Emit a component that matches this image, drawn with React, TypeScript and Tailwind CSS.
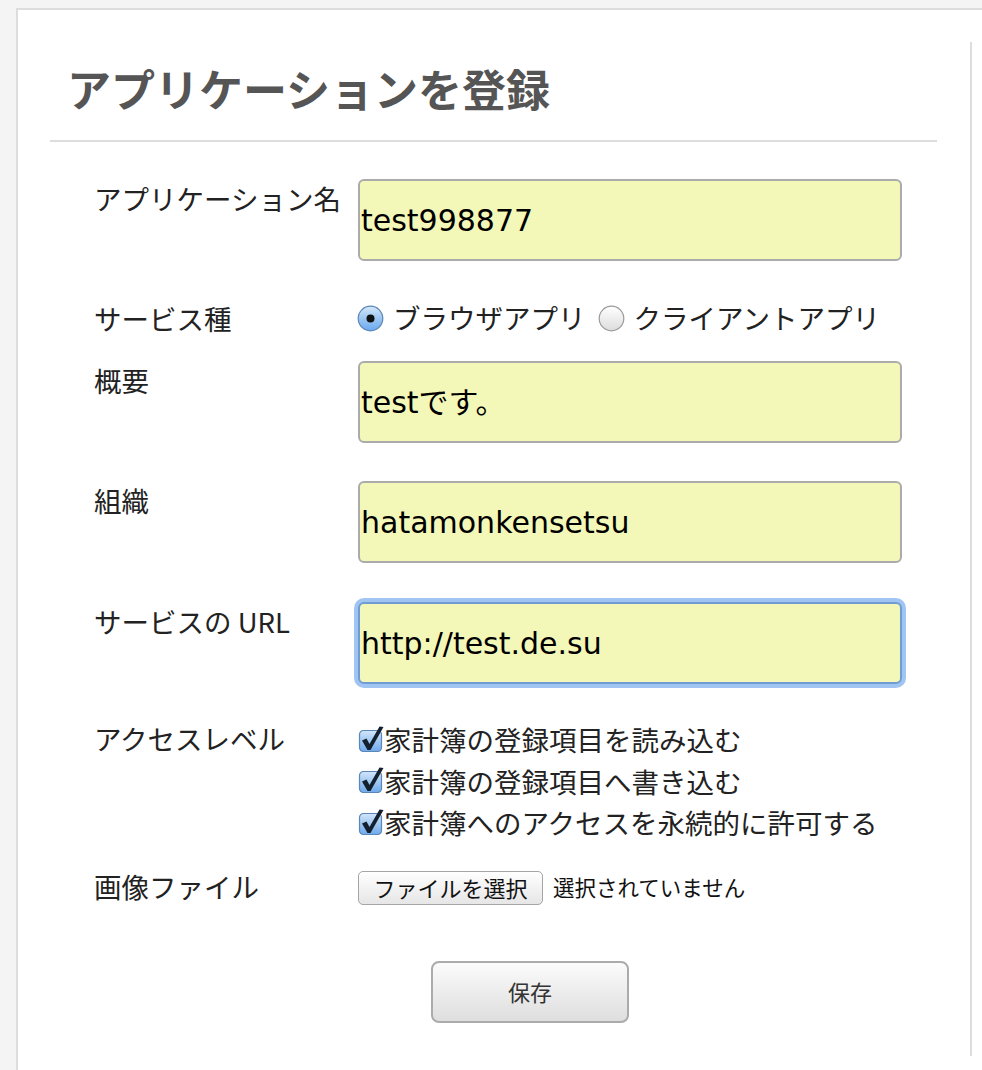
import React from "react";

const jp = { fontFamily: '"Noto Sans CJK JP", "Noto Sans", sans-serif' };
const inputFont = { fontFamily: '"DejaVu Sans", "Noto Sans CJK JP", sans-serif' };

function Radio({ checked }: { checked: boolean }) {
  return (
    <svg width="27" height="27" viewBox="0 0 27 27" className="shrink-0">
      <defs>
        <linearGradient id="rOn" x1="0" y1="0" x2="0" y2="1">
          <stop offset="0" stopColor="#d6e8fb" />
          <stop offset="0.5" stopColor="#9cc6f1" />
          <stop offset="1" stopColor="#6aaaf0" />
        </linearGradient>
        <linearGradient id="rOff" x1="0" y1="0" x2="0" y2="1">
          <stop offset="0" stopColor="#ffffff" />
          <stop offset="1" stopColor="#dcdcdc" />
        </linearGradient>
      </defs>
      {checked ? (
        <>
          <circle cx="13.5" cy="13.5" r="12.3" fill="url(#rOn)" stroke="#5b86b6" strokeWidth="1.2" />
          <circle cx="13.5" cy="13.5" r="4" fill="#111" />
        </>
      ) : (
        <circle cx="13.5" cy="13.5" r="12.3" fill="url(#rOff)" stroke="#9a9a9a" strokeWidth="1.2" />
      )}
    </svg>
  );
}

function Check() {
  return (
    <svg width="26" height="28" viewBox="0 0 26 28" className="shrink-0 -mt-[2px]">
      <defs>
        <linearGradient id="cOn" x1="0" y1="0" x2="0" y2="1">
          <stop offset="0" stopColor="#d3e6fb" />
          <stop offset="0.5" stopColor="#a0c8f2" />
          <stop offset="1" stopColor="#6eaaee" />
        </linearGradient>
      </defs>
      <rect x="1.5" y="5.5" width="22" height="21" rx="4" fill="url(#cOn)" stroke="#5b86b6" strokeWidth="1.2" />
      <path d="M4 15.5 L8.5 13.5 L11.5 19 L21.5 1.5 L25.5 2 L12.5 25 L9.5 25 Z" fill="#14202e" />
    </svg>
  );
}

function TextBox({ value, focused }: { value: string; focused?: boolean }) {
  return (
    <div
      className={
        "w-[544px] h-[82px] rounded-[6px] bg-[#f3f7b8] flex items-center pl-[1px] text-[30px] text-black " +
        (focused
          ? "border-2 border-[#6f9dd3] shadow-[0_0_0_4px_rgba(130,178,238,0.75)]"
          : "border-2 border-[#ababab]")
      }
      style={inputFont}
    >
      {value}
    </div>
  );
}

function Label({ children }: { children: React.ReactNode }) {
  return (
    <div className="w-[308px] shrink-0 pl-[44px] leading-[38px] text-[27.5px] text-[#222]" style={jp}>
      {children}
    </div>
  );
}

export default function App() {
  return (
    <div className="min-h-screen bg-[#f4f4f4] pt-[8px] pl-[16px]">
      <div className="bg-white border-l-2 border-t-2 border-[#dddddd] h-[1062px] pt-[32px]">
        <div className="w-[954px] h-[1014px] border-r-2 border-[#dddddd] px-[32px] pt-[20px]">
          <h1 className="pl-[17px] text-[44px] leading-[52px] font-bold text-[#555555]" style={jp}>
            アプリケーションを登録
          </h1>
          <div className="h-[2px] w-[887px] bg-[#dddddd] mt-[26px]" />

          <div className="mt-[37px] flex">
            <Label>アプリケーション名</Label>
            <TextBox value="test998877" />
          </div>

          <div className="mt-[38px] flex items-center h-[38px]">
            <Label>サービス種</Label>
            <div className="flex items-center text-[27.5px] text-[#222] -ml-[1px]" style={jp}>
              <Radio checked />
              <span className="ml-[9px]">ブラウザアプリ</span>
              <span className="ml-[12px] flex"><Radio checked={false} /></span>
              <span className="ml-[9px]">クライアントアプリ</span>
            </div>
          </div>

          <div className="mt-[24px] flex">
            <Label>概要</Label>
            <TextBox value="testです。" />
          </div>

          <div className="mt-[38px] flex">
            <Label>組織</Label>
            <TextBox value="hatamonkensetsu" />
          </div>

          <div className="mt-[39px] flex">
            <Label>サービスの URL</Label>
            <TextBox value="http://test.de.su" focused />
          </div>

          <div className="mt-[35px] flex">
            <Label>アクセスレベル</Label>
            <div className="flex flex-col text-[27.5px] text-[#222] leading-[41.5px]" style={jp}>
              <div className="flex items-center"><Check /><span>家計簿の登録項目を読み込む</span></div>
              <div className="flex items-center"><Check /><span>家計簿の登録項目へ書き込む</span></div>
              <div className="flex items-center"><Check /><span>家計簿へのアクセスを永続的に許可する</span></div>
            </div>
          </div>

          <div className="mt-[23px] flex items-center">
            <Label>画像ファイル</Label>
            <div className="flex items-center mt-[4px]" style={jp}>
              <div className="h-[34px] w-[185px] rounded-[5px] border border-[#a5a5a5] bg-gradient-to-b from-white to-[#e6e6e6] flex items-center justify-center text-[22px] text-[#111]">
                ファイルを選択
              </div>
              <span className="ml-[10px] text-[21.5px] text-[#111]">選択されていません</span>
            </div>
          </div>

          <div className="mt-[56px] pl-[381px]">
            <div
              className="w-[198px] h-[62px] rounded-[8px] border-2 border-[#ababab] bg-gradient-to-b from-[#fbfbfb] to-[#dedede] flex items-center justify-center text-[22px] text-[#333]"
              style={jp}
            >
              保存
            </div>
          </div>
        </div>
      </div>
    </div>
  );
}
